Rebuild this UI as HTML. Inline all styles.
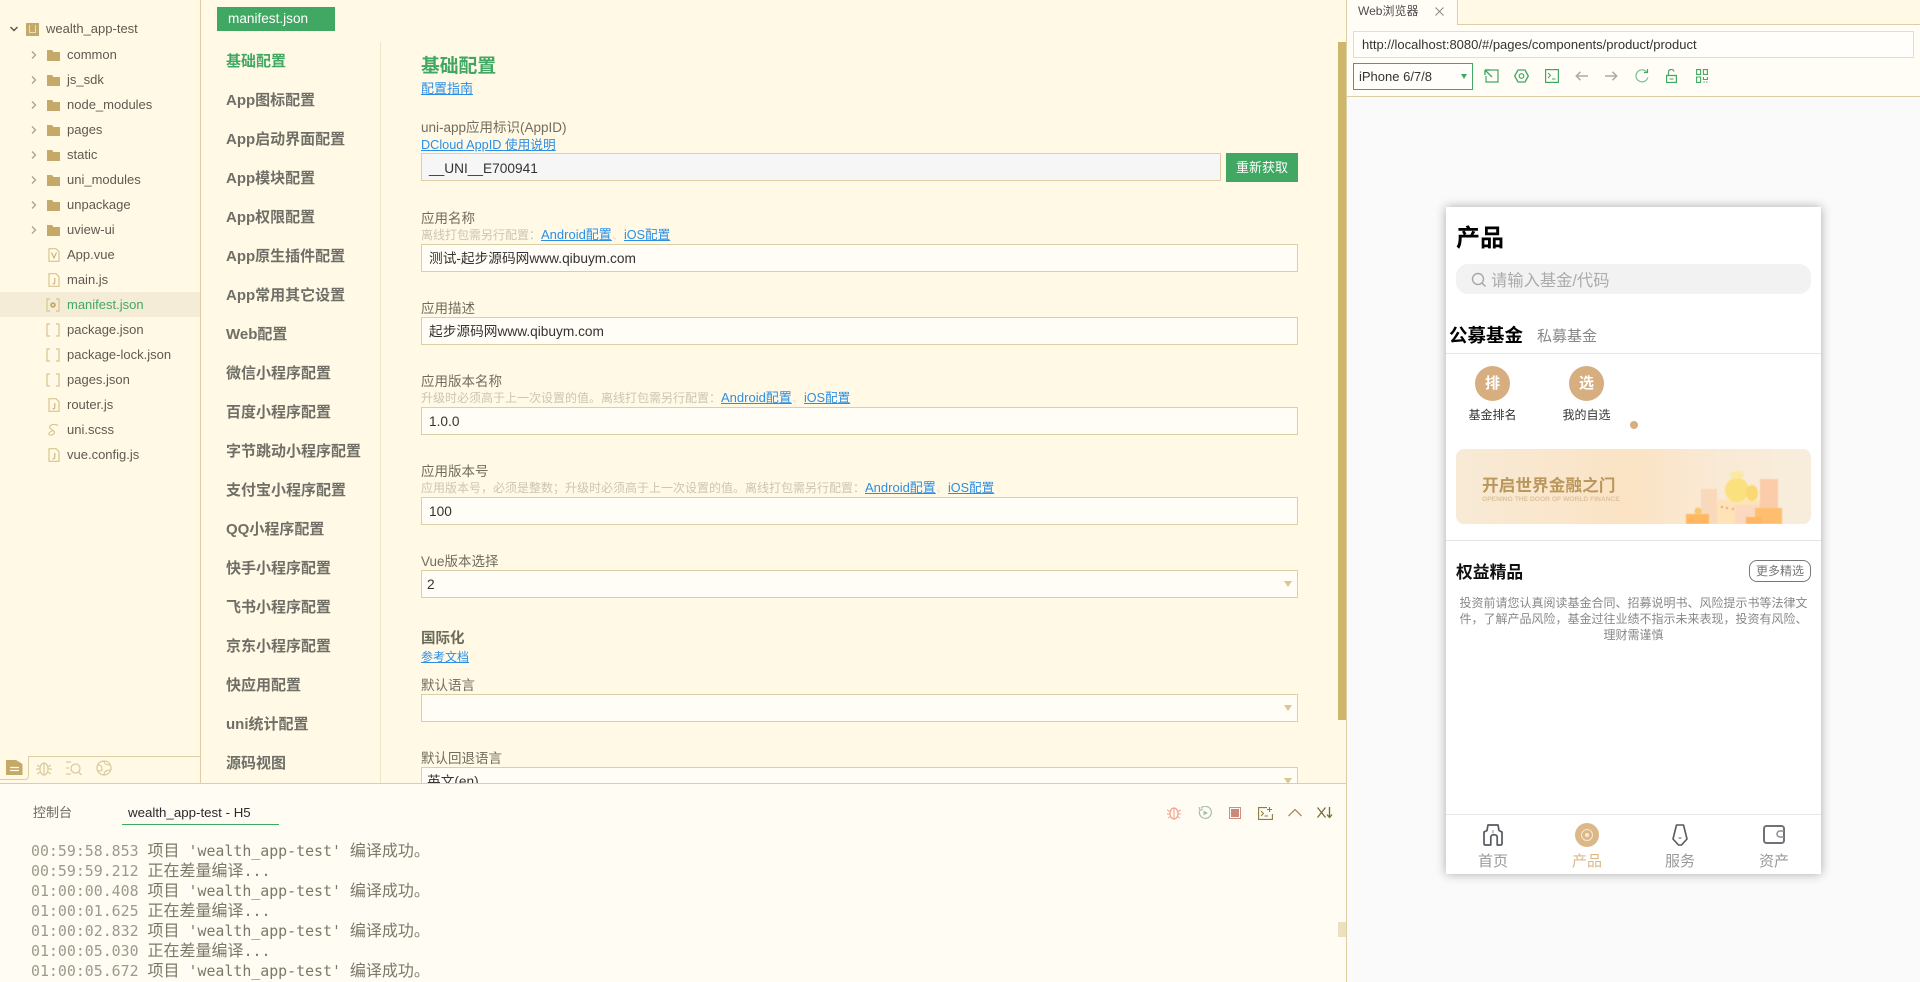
<!DOCTYPE html>
<html lang="zh"><head><meta charset="utf-8"><title>manifest.json</title>
<style>
html,body{margin:0;padding:0;width:1920px;height:982px;overflow:hidden;background:#fff9e6}
body{position:relative;font-family:"Liberation Sans","Noto Sans CJK SC",sans-serif;font-size:13px;color:#5f5f52}
.a,.t,.i,.s{position:absolute}
.t{white-space:nowrap;line-height:20px;height:20px}
.tree{color:#5e5a50;font-size:13px;left:67px}
.menu{left:226px;font-size:15px;font-weight:700;color:#6f6f67}
.lb{left:421px;font-size:13.5px;color:#716d5e}
.hint{font-size:12px;color:#cbc6b2}
.sep{font-size:12px;color:#e4dfca}
.lk{font-size:12.6px;color:#2b8fe6;text-decoration:underline}
.lka{font-size:13px}
.in{position:absolute;left:421px;width:875px;height:26px;border:1px solid #dccfa6;background:#fffdf5}
.v{font-size:13.7px;color:#333;left:429px}
.arr{position:absolute;left:1284px;width:0;height:0;border-left:4px solid transparent;border-right:4px solid transparent;border-top:6px solid #d8c894}
.log{left:31px;font-family:"DejaVu Sans Mono","Noto Sans CJK SC",monospace;font-size:14.9px;color:#9b9b8c;white-space:pre}
.log b{font-weight:400;color:#7c7868}
.log u{text-decoration:none;font-size:16px;color:#7c7868}
.i{fill:none}
</style></head><body>

<svg width="0" height="0" style="position:absolute"><defs>
<symbol id="fd" viewBox="0 0 13 12"><path d="M0 1h5l1.500 2H13v9H0z" fill="#c5a968"/></symbol>
<symbol id="ch" viewBox="0 0 8 12"><path d="M2 2.500L5.500 6 2 9.500" fill="none" stroke="#aaa28c" stroke-width="1.300"/></symbol>
<symbol id="fl" viewBox="0 0 12 14"><path d="M1 .7h7l3 3v9.600H1z" fill="none" stroke="#d8c48f" stroke-width="1.200"/><path d="M6.800 5v4.500c0 1-.8 1.500-2.300 1.300" fill="none" stroke="#c5a968" stroke-width="1"/></symbol>
<symbol id="br" viewBox="0 0 14 14"><path d="M4 1H1v12h3M10 1h3v12h-3" fill="none" stroke="#d8c48f" stroke-width="1.200"/></symbol>
</defs></svg>

<!-- left tree -->
<div class="a" style="left:200px;top:0;width:1px;height:784px;background:#dccfa6"></div>
<svg class="i" style="left:9px;top:26px" width="10" height="7"><path d="M1.500 1l3.500 3.500L8.500 1" stroke="#55544a" stroke-width="1.400" fill="none"/></svg>
<div class="a" style="left:26px;top:23px;width:13px;height:13px;background:#c5a968"></div>
<div class="a" style="left:29px;top:25px;width:7px;height:8px;border:1px solid #ecdfb8;border-top:0;box-sizing:border-box"></div>
<div class="t" style="left:46px;top:19px;font-size:13px;color:#5e5a50">wealth_app-test</div>

<svg class="i" style="left:30px;top:49px" width="8" height="12"><use href="#ch"/></svg><svg class="i" style="left:47px;top:49px" width="13" height="12"><use href="#fd"/></svg><div class="t tree" style="top:45px">common</div>
<svg class="i" style="left:30px;top:74px" width="8" height="12"><use href="#ch"/></svg><svg class="i" style="left:47px;top:74px" width="13" height="12"><use href="#fd"/></svg><div class="t tree" style="top:70px">js_sdk</div>
<svg class="i" style="left:30px;top:99px" width="8" height="12"><use href="#ch"/></svg><svg class="i" style="left:47px;top:99px" width="13" height="12"><use href="#fd"/></svg><div class="t tree" style="top:95px">node_modules</div>
<svg class="i" style="left:30px;top:124px" width="8" height="12"><use href="#ch"/></svg><svg class="i" style="left:47px;top:124px" width="13" height="12"><use href="#fd"/></svg><div class="t tree" style="top:120px">pages</div>
<svg class="i" style="left:30px;top:149px" width="8" height="12"><use href="#ch"/></svg><svg class="i" style="left:47px;top:149px" width="13" height="12"><use href="#fd"/></svg><div class="t tree" style="top:145px">static</div>
<svg class="i" style="left:30px;top:174px" width="8" height="12"><use href="#ch"/></svg><svg class="i" style="left:47px;top:174px" width="13" height="12"><use href="#fd"/></svg><div class="t tree" style="top:170px">uni_modules</div>
<svg class="i" style="left:30px;top:199px" width="8" height="12"><use href="#ch"/></svg><svg class="i" style="left:47px;top:199px" width="13" height="12"><use href="#fd"/></svg><div class="t tree" style="top:195px">unpackage</div>
<svg class="i" style="left:30px;top:224px" width="8" height="12"><use href="#ch"/></svg><svg class="i" style="left:47px;top:224px" width="13" height="12"><use href="#fd"/></svg><div class="t tree" style="top:220px">uview-ui</div>

<svg class="i" style="left:48px;top:248px" width="12" height="14" viewBox="0 0 12 14"><path d="M1 .7h7l3 3v9.600H1z" stroke="#d8c48f" stroke-width="1.200"/><path d="M3.500 4.500L6 10l2.500-5.500" stroke="#c5a968"/></svg><div class="t tree" style="top:245px">App.vue</div>
<svg class="i" style="left:48px;top:273px" width="12" height="14"><use href="#fl"/></svg><div class="t tree" style="top:270px">main.js</div>
<div class="a" style="left:0;top:292px;width:200px;height:25px;background:#f4ecd6"></div>
<svg class="i" style="left:46px;top:298px" width="14" height="14" viewBox="0 0 14 14"><path d="M4 1H1v12h3M10 1h3v12h-3" stroke="#d8c48f" stroke-width="1.200"/><circle cx="7" cy="7" r="2.800" fill="#c5a968"/><circle cx="7" cy="7" r="1" fill="#f4ecd6"/></svg><div class="t tree" style="top:295px;color:#41a863">manifest.json</div>
<svg class="i" style="left:46px;top:323px" width="14" height="14"><use href="#br"/></svg><div class="t tree" style="top:320px">package.json</div>
<svg class="i" style="left:46px;top:348px" width="14" height="14"><use href="#br"/></svg><div class="t tree" style="top:345px">package-lock.json</div>
<svg class="i" style="left:46px;top:373px" width="14" height="14"><use href="#br"/></svg><div class="t tree" style="top:370px">pages.json</div>
<svg class="i" style="left:48px;top:398px" width="12" height="14"><use href="#fl"/></svg><div class="t tree" style="top:395px">router.js</div>
<svg class="i" style="left:47px;top:423px" width="13" height="14" viewBox="0 0 13 14"><path d="M11 2.500C8 .5 3 1.500 2.500 4c-.5 2.500 5.500 3 5 5.500-.4 2-4 3.500-5.500 2-1-1.300 2-3.500 4.500-4" stroke="#d8c48f" stroke-width="1.100"/></svg><div class="t tree" style="top:420px">uni.scss</div>
<svg class="i" style="left:48px;top:448px" width="12" height="14"><use href="#fl"/></svg><div class="t tree" style="top:445px">vue.config.js</div>

<!-- left bottom tabs -->
<div class="a" style="left:28px;top:756px;width:172px;height:1px;background:#dccfa6"></div>
<div class="a" style="left:-4px;top:756px;width:33px;height:24px;box-sizing:border-box;border-right:1px solid #dccfa6;border-bottom:1px solid #dccfa6;border-bottom-right-radius:4px"></div>
<svg class="i" style="left:6px;top:760px" width="17" height="15" viewBox="0 0 17 15"><path d="M0 0h10l6.500 4v11H0z" fill="#c5a968"/><path d="M4 7.500h9M4 10.500h9" stroke="#fff8e6" stroke-width="1.300"/></svg>
<svg class="i" style="left:36px;top:761px" width="16" height="15" viewBox="0 0 16 15"><ellipse cx="8" cy="8" rx="4" ry="6" stroke="#dccb9f" stroke-width="1.300"/><path d="M8 2v12M1 4l3 2M15 4l-3 2M0 8h4M16 8h-4M1 13l3-2M15 13l-3-2" stroke="#dccb9f" stroke-width="1.300"/></svg>
<svg class="i" style="left:66px;top:761px" width="16" height="15" viewBox="0 0 16 15"><path d="M0 1h5M0 7h3M0 13h5" stroke="#dccb9f" stroke-width="1.300"/><circle cx="9.500" cy="7.500" r="4.500" stroke="#dccb9f" stroke-width="1.300"/><path d="M12.500 11l3 3" stroke="#dccb9f" stroke-width="1.300"/></svg>
<svg class="i" style="left:96px;top:760px" width="16" height="16" viewBox="0 0 16 16"><circle cx="8" cy="8" r="7" stroke="#dccb9f" stroke-width="1.300"/><path d="M2 5c3 0 4 1 4 4s-3 2-5 1M8 1c0 3 2 4 6 4M8 15c0-3 2-5 7-5" stroke="#dccb9f" stroke-width="1.200"/></svg>

<!-- file tab -->
<div class="a" style="left:217px;top:7px;width:118px;height:24px;background:#41a863"></div>
<div class="t" style="left:228px;top:9px;color:#fff;font-size:13.6px">manifest.json</div>

<!-- settings menu -->
<div class="a" style="left:380px;top:42px;width:1px;height:742px;background:#efe6c8"></div>
<div class="t menu" style="top:52px;color:#41a863">基础配置</div>
<div class="t menu" style="top:91px">App图标配置</div>
<div class="t menu" style="top:130px">App启动界面配置</div>
<div class="t menu" style="top:169px">App模块配置</div>
<div class="t menu" style="top:208px">App权限配置</div>
<div class="t menu" style="top:247px">App原生插件配置</div>
<div class="t menu" style="top:286px">App常用其它设置</div>
<div class="t menu" style="top:325px">Web配置</div>
<div class="t menu" style="top:364px">微信小程序配置</div>
<div class="t menu" style="top:403px">百度小程序配置</div>
<div class="t menu" style="top:442px">字节跳动小程序配置</div>
<div class="t menu" style="top:481px">支付宝小程序配置</div>
<div class="t menu" style="top:520px">QQ小程序配置</div>
<div class="t menu" style="top:559px">快手小程序配置</div>
<div class="t menu" style="top:598px">飞书小程序配置</div>
<div class="t menu" style="top:637px">京东小程序配置</div>
<div class="t menu" style="top:676px">快应用配置</div>
<div class="t menu" style="top:715px">uni统计配置</div>
<div class="t menu" style="top:754px">源码视图</div>

<!-- form -->
<div class="t" style="left:421px;top:56px;font-size:18.8px;font-weight:700;color:#41a863">基础配置</div>
<div class="t lk" style="left:421px;top:79px;font-size:13px">配置指南</div>

<div class="t lb" style="top:118px">uni-app应用标识(AppID)</div>
<div class="t lk" style="left:421px;top:135px;font-size:12.7px">DCloud AppID 使用说明</div>
<div class="in" style="top:153px;width:798px;background:#f6f6f6"></div>
<div class="t v" style="top:159px">__UNI__E700941</div>
<div class="a" style="left:1226px;top:153px;width:72px;height:29px;background:#41a863"></div>
<div class="t" style="left:1226px;width:72px;text-align:center;top:158px;color:#fff;font-size:13px">重新获取</div>

<div class="t lb" style="top:209px">应用名称</div>
<div class="t hint" style="left:421px;top:225px">离线打包需另行配置：</div>
<div class="t lk lka" style="left:541px;top:225px">Android配置</div><div class="t sep" style="left:612px;top:225px">、</div><div class="t lk" style="left:624px;top:225px">iOS配置</div>
<div class="in" style="top:244px"></div>
<div class="t v" style="top:249px">测试-起步源码网www.qibuym.com</div>

<div class="t lb" style="top:299px">应用描述</div>
<div class="in" style="top:317px"></div>
<div class="t v" style="top:322px">起步源码网www.qibuym.com</div>

<div class="t lb" style="top:372px">应用版本名称</div>
<div class="t hint" style="left:421px;top:388px">升级时必须高于上一次设置的值。离线打包需另行配置：</div>
<div class="t lk lka" style="left:721px;top:388px">Android配置</div><div class="t sep" style="left:792px;top:388px">、</div><div class="t lk" style="left:804px;top:388px">iOS配置</div>
<div class="in" style="top:407px"></div>
<div class="t v" style="top:412px">1.0.0</div>

<div class="t lb" style="top:462px">应用版本号</div>
<div class="t hint" style="left:421px;top:478px">应用版本号，必须是整数；升级时必须高于上一次设置的值。离线打包需另行配置：</div>
<div class="t lk lka" style="left:865px;top:478px">Android配置</div><div class="t sep" style="left:936px;top:478px">、</div><div class="t lk" style="left:948px;top:478px">iOS配置</div>
<div class="in" style="top:497px"></div>
<div class="t v" style="top:502px">100</div>

<div class="t lb" style="top:552px">Vue版本选择</div>
<div class="in" style="top:570px"></div>
<div class="t v" style="top:575px;left:427px">2</div>
<div class="arr" style="top:581px"></div>

<div class="t" style="left:421px;top:629px;font-size:14.500px;font-weight:700;color:#6b6b5a">国际化</div>
<div class="t lk" style="left:421px;top:647px;font-size:12px">参考文档</div>
<div class="t lb" style="top:676px">默认语言</div>
<div class="in" style="top:694px"></div>
<div class="arr" style="top:705px"></div>
<div class="t lb" style="top:749px">默认回退语言</div>
<div class="in" style="top:767px"></div>
<div class="t v" style="top:772px;left:427px">英文(en)</div>
<div class="arr" style="top:778px"></div>

<!-- scrollbar -->
<div class="a" style="left:1338px;top:42px;width:8px;height:678px;background:#cfb66d"></div>

<!-- bottom console -->
<div class="a" style="left:0;top:783px;width:1347px;height:199px;background:#fffcf3;border-top:1px solid #dccfa6;box-sizing:border-box"></div>
<div class="t" style="left:33px;top:803px;color:#6a6a60;font-size:13px">控制台</div>
<div class="t" style="left:128px;top:803px;color:#2a2a2a;font-size:13.3px">wealth_app-test - H5</div>
<div class="a" style="left:122px;top:824px;width:157px;height:1px;background:#41a863"></div>

<div class="t log" style="top:841px">00:59:58.853 <u>项目</u><b> 'wealth_app-test' </b><u>编译成功。</u></div>
<div class="t log" style="top:861px">00:59:59.212 <u>正在差量编译</u><b>...</b></div>
<div class="t log" style="top:881px">01:00:00.408 <u>项目</u><b> 'wealth_app-test' </b><u>编译成功。</u></div>
<div class="t log" style="top:901px">01:00:01.625 <u>正在差量编译</u><b>...</b></div>
<div class="t log" style="top:921px">01:00:02.832 <u>项目</u><b> 'wealth_app-test' </b><u>编译成功。</u></div>
<div class="t log" style="top:941px">01:00:05.030 <u>正在差量编译</u><b>...</b></div>
<div class="t log" style="top:961px">01:00:05.672 <u>项目</u><b> 'wealth_app-test' </b><u>编译成功。</u></div>

<svg class="i" style="left:1167px;top:806px" width="14" height="14" viewBox="0 0 14 14"><ellipse cx="7" cy="7.500" rx="4" ry="5.500" stroke="#f0a090" stroke-width="1.200"/><path d="M7 2v11M0 4l3 1.500M14 4l-3 1.500M0 8h3M14 8h-3M1 12l2.500-1.500M13 12l-2.500-1.500" stroke="#f0a090"/></svg>
<svg class="i" style="left:1198px;top:806px" width="14" height="14" viewBox="0 0 14 14"><path d="M3 2.200A6 6 0 1 1 1.500 5" stroke="#a9bfae" stroke-width="1.200"/><path d="M1 1l1 3.500L5 3" stroke="#a9bfae" stroke-width="1.100"/><path d="M5.500 4.500v5l4.500-2.500z" fill="#a9bfae"/></svg>
<div class="a" style="left:1229px;top:807px;width:12px;height:12px;box-sizing:border-box;border:1px solid #cf8e80;background:#c98a7d;box-shadow:inset 0 0 0 1px #fffcf3"></div>
<svg class="i" style="left:1258px;top:807px" width="15" height="13" viewBox="0 0 15 13"><path d="M9 .6H.6v11.800h13.800V7" stroke="#8f7a3f" stroke-width="1.100"/><path d="M3 4l2.500 2.500L3 9M6.500 9H10M11.500 0v5M9 2.500h5" stroke="#8f7a3f" stroke-width="1"/></svg>
<svg class="i" style="left:1288px;top:808px" width="14" height="9" viewBox="0 0 14 9"><path d="M.5 8L7 1.500 13.500 8" stroke="#a28f5c" stroke-width="1.300"/></svg>
<svg class="i" style="left:1317px;top:807px" width="16" height="12" viewBox="0 0 16 12"><path d="M.5.500l8 10M8.500.500l-8 10" stroke="#7a6a38" stroke-width="1.300"/><path d="M12.500 0v10M10 7.500l2.500 3 2.500-3" stroke="#7a6a38" stroke-width="1.300"/></svg>
<div class="a" style="left:1338px;top:922px;width:8px;height:15px;background:#ece0c0"></div>

<!-- right panel -->
<div class="a" style="left:1346px;top:0;width:1px;height:982px;background:#dccfa6"></div>
<div class="a" style="left:1347px;top:0;width:573px;height:97px;background:#fffdf6;border-bottom:1px solid #dccfa6;box-sizing:border-box"></div>
<div class="a" style="left:1457px;top:0;width:463px;height:25px;background:#fff9e6;border-left:1px solid #dccfa6;border-bottom:1px solid #dccfa6;box-sizing:border-box"></div>
<div class="t" style="left:1358px;top:1px;font-size:12px;color:#4c4c4c">Web浏览器</div>
<svg class="i" style="left:1435px;top:7px" width="9" height="9"><path d="M.5.500l8 8M8.500.500l-8 8" stroke="#8a8a7d" stroke-width="1"/></svg>

<div class="a" style="left:1353px;top:31px;width:561px;height:27px;box-sizing:border-box;border:1px solid #ddd;background:#fffefb"></div>
<div class="t" style="left:1362px;top:35px;font-size:13px;color:#333">http://localhost:8080/#/pages/components/product/product</div>
<div class="a" style="left:1353px;top:63px;width:120px;height:27px;box-sizing:border-box;border:1px solid #41a863;background:#fffefb"></div>
<div class="t" style="left:1359px;top:67px;font-size:13px;color:#333">iPhone 6/7/8</div>
<div class="a" style="left:1461px;top:74px;width:0;height:0;border-left:3.500px solid transparent;border-right:3.500px solid transparent;border-top:5px solid #41a863"></div>

<svg class="i" style="left:1484px;top:69px" width="15" height="14" viewBox="0 0 15 14"><path d="M6 1h8v12H2V7" stroke="#41a863" stroke-width="1.200"/><path d="M1 1l7 7M1 1v5M1 1h5" stroke="#41a863" stroke-width="1.400"/></svg>
<svg class="i" style="left:1514px;top:69px" width="15" height="14" viewBox="0 0 15 14"><path d="M4 1h7l3.300 6L11 13H4L.7 7z" stroke="#41a863" stroke-width="1.300" stroke-linejoin="round"/><circle cx="7.500" cy="7" r="2.300" stroke="#41a863" stroke-width="1.200"/></svg>
<svg class="i" style="left:1545px;top:69px" width="14" height="14" viewBox="0 0 14 14"><rect x=".6" y=".6" width="12.800" height="12.800" stroke="#41a863" stroke-width="1.200"/><path d="M3 4l2.500 2.500L3 9M7 10h3.500" stroke="#41a863"/></svg>
<svg class="i" style="left:1575px;top:71px" width="13" height="10" viewBox="0 0 13 10"><path d="M13 5H1.500M5.500 .8L1.300 5l4.200 4.200" stroke="#aaa" stroke-width="1.500"/></svg>
<svg class="i" style="left:1605px;top:71px" width="13" height="10" viewBox="0 0 13 10"><path d="M0 5h11.500M7.500 .8L11.700 5 7.500 9.200" stroke="#aaa" stroke-width="1.500"/></svg>
<svg class="i" style="left:1635px;top:69px" width="14" height="14" viewBox="0 0 14 14"><path d="M12 3.500A6 6 0 1 0 12.800 8.500" stroke="#7cc496" stroke-width="1.300"/><path d="M9 3.500h3.500V0" stroke="#41a863" stroke-width="1.200"/></svg>
<svg class="i" style="left:1666px;top:69px" width="11" height="14" viewBox="0 0 11 14"><path d="M.6 6.500h9.800v7H.6zM2.500 6V3a2.800 2.800 0 0 1 5.500-.5" stroke="#41a863" stroke-width="1.200"/><path d="M3.500 10h4" stroke="#41a863"/></svg>
<svg class="i" style="left:1696px;top:69px" width="12" height="14" viewBox="0 0 12 14"><path d="M.6.600h4v4.800h-4zM7.400.600h4v4.800h-4zM.6 8h4v5.400h-4zM7.400 8v2.500h4V8M7.400 13h1.500M10 13h1.500" stroke="#41a863" stroke-width="1.100"/></svg>

<div class="a" style="left:1347px;top:97px;width:573px;height:885px;background:#fafafa"></div>

<!-- phone -->
<div class="a" style="left:1446px;top:207px;width:375px;height:667px;background:#fff;box-shadow:0 0 10px rgba(0,0,0,.32)"></div>
<div class="t" style="left:1456px;top:229px;font-size:24px;font-weight:700;color:#000">产品</div>
<div class="a" style="left:1456px;top:264px;width:355px;height:30px;border-radius:12px;background:#f2f2f2"></div>
<svg class="i" style="left:1471px;top:272px" width="16" height="16" viewBox="0 0 16 16"><circle cx="7" cy="7" r="5.500" stroke="#a8a8a8" stroke-width="1.400"/><path d="M11 11l3.500 3.500" stroke="#a8a8a8" stroke-width="1.500"/></svg>
<div class="t" style="left:1491px;top:271px;font-size:16.300px;color:#ababab">请输入基金/代码</div>
<div class="t" style="left:1449px;top:326px;font-size:18.500px;font-weight:700;color:#000">公募基金</div>
<div class="t" style="left:1537px;top:327px;font-size:15px;color:#888">私募基金</div>
<div class="a" style="left:1446px;top:353px;width:375px;height:1px;background:#e5e5e5"></div>

<div class="a" style="left:1475px;top:366px;width:35px;height:35px;border-radius:50%;background:#d6ae7f"></div>
<div class="t" style="left:1475px;width:35px;text-align:center;top:374px;font-size:15px;font-weight:700;color:#fff">排</div>
<div class="a" style="left:1569px;top:366px;width:35px;height:35px;border-radius:50%;background:#d6ae7f"></div>
<div class="t" style="left:1569px;width:35px;text-align:center;top:374px;font-size:15px;font-weight:700;color:#fff">选</div>
<div class="t" style="left:1468px;width:49px;text-align:center;top:405px;font-size:12px;color:#333">基金排名</div>
<div class="t" style="left:1562px;width:49px;text-align:center;top:405px;font-size:12px;color:#333">我的自选</div>
<div class="a" style="left:1630px;top:421px;width:8px;height:8px;border-radius:50%;background:#d6ae7f"></div>

<!-- banner -->
<div class="a" style="left:1456px;top:449px;width:355px;height:75px;border-radius:8px;overflow:hidden;background:linear-gradient(90deg,#f8ead6 0%,#fbe3c4 50%,#f9ead6 75%,#f8eddc 100%)">
<svg width="355" height="75" style="position:absolute;left:0;top:0;filter:blur(.6px)"><g transform="translate(-1456,-449)">
<rect x="1701" y="489" width="16" height="35" fill="#f9d9bc"/>
<rect x="1717" y="500" width="43" height="24" fill="#fde3b5"/>
<rect x="1735" y="505" width="25" height="19" fill="#fbd9c0"/>
<rect x="1760" y="479" width="18" height="45" fill="#fbcbaa"/>
<rect x="1755" y="508" width="27" height="16" fill="#ffbe6e"/>
<rect x="1746" y="517" width="16" height="7" fill="#ffb861"/>
<rect x="1686" y="514" width="23" height="10" fill="#ffb861"/>
<circle cx="1698" cy="511" r="3.500" fill="#f8c66c"/>
<ellipse cx="1737" cy="490" rx="12" ry="12" fill="#fbe07e"/>
<ellipse cx="1752" cy="493" rx="6" ry="8" fill="#fbd873"/>
<ellipse cx="1737" cy="475" rx="7" ry="4" fill="#fbe9a0"/>
<circle cx="1722" cy="507" r="1" fill="#e98a70"/><circle cx="1727" cy="508" r="1" fill="#e98a70"/><circle cx="1733" cy="509" r="1" fill="#e98a70"/>
</g></svg>
</div>
<div class="t" style="left:1482px;top:476px;font-size:16.700px;font-weight:700;color:#ba975c">开启世界金融之门</div>
<div class="t" style="left:1482px;top:490px;font-size:6.700px;font-weight:700;color:#dfc39c">OPENING THE DOOR OF WORLD FINANCE</div>

<div class="a" style="left:1446px;top:540px;width:375px;height:1px;background:#e5e5e5"></div>
<div class="t" style="left:1456px;top:563px;font-size:16.800px;font-weight:700;color:#111">权益精品</div>
<div class="a" style="left:1749px;top:560px;width:62px;height:22px;box-sizing:border-box;border:1px solid #777;border-radius:8px"></div>
<div class="t" style="left:1749px;width:62px;text-align:center;top:561px;font-size:12px;color:#777">更多精选</div>
<div class="t" style="left:1446px;width:375px;text-align:center;top:593px;font-size:12px;color:#888">投资前请您认真阅读基金合同、招募说明书、风险提示书等法律文</div>
<div class="t" style="left:1446px;width:375px;text-align:center;top:609px;font-size:12px;color:#888">件，了解产品风险，基金过往业绩不指示未来表现，投资有风险、</div>
<div class="t" style="left:1446px;width:375px;text-align:center;top:625px;font-size:12px;color:#888">理财需谨慎</div>

<!-- tabbar -->
<div class="a" style="left:1446px;top:814px;width:375px;height:1px;background:#e8e8e8"></div>
<svg class="i" style="left:1483px;top:824px" width="20" height="22" viewBox="0 0 20 22"><path d="M5 1h10l1 5.500 3 1.500v11.800a1.200 1.200 0 0 1-1.200 1.200h-3.600v-7.500c0-1.800-.9-2.700-2.700-2.700h-1c-1.800 0-2.700.9-2.700 2.700V21H2.200A1.200 1.200 0 0 1 1 19.800V8l3-1.500z" stroke="#555a60" stroke-width="1.700" stroke-linejoin="round"/><path d="M10 6v3.500" stroke="#a0a4a8" stroke-width="1.300"/></svg>
<div class="a" style="left:1575px;top:823px;width:24px;height:24px;border-radius:50%;background:#dcb787"></div>
<div class="a" style="left:1581px;top:829px;width:12px;height:12px;box-sizing:border-box;border-radius:50%;border:1px solid #f6e9d6"></div>
<div class="a" style="left:1585px;top:833px;width:4px;height:4px;border-radius:50%;background:#f6e9d6"></div>
<svg class="i" style="left:1672px;top:824px" width="16" height="22" viewBox="0 0 16 22"><path d="M4.500 1h7l3.500 14-5.500 6h-3L1 15z" stroke="#555a60" stroke-width="1.600" stroke-linejoin="round"/><path d="M6.500 14h3" stroke="#8a8e92" stroke-width="1.400"/></svg>
<svg class="i" style="left:1763px;top:825px" width="22" height="19" viewBox="0 0 22 19"><rect x="1" y="1" width="20" height="17" rx="2.500" stroke="#6f7378" stroke-width="2"/><path d="M21 6h-4a3 3 0 0 0 0 6h4" stroke="#8a8e92" stroke-width="1.500"/></svg>
<div class="t" style="left:1463px;width:60px;text-align:center;top:852px;font-size:15px;color:#999">首页</div>
<div class="t" style="left:1557px;width:60px;text-align:center;top:852px;font-size:15px;color:#dcb787">产品</div>
<div class="t" style="left:1650px;width:60px;text-align:center;top:852px;font-size:15px;color:#999">服务</div>
<div class="t" style="left:1744px;width:60px;text-align:center;top:852px;font-size:15px;color:#999">资产</div>

</body></html>
